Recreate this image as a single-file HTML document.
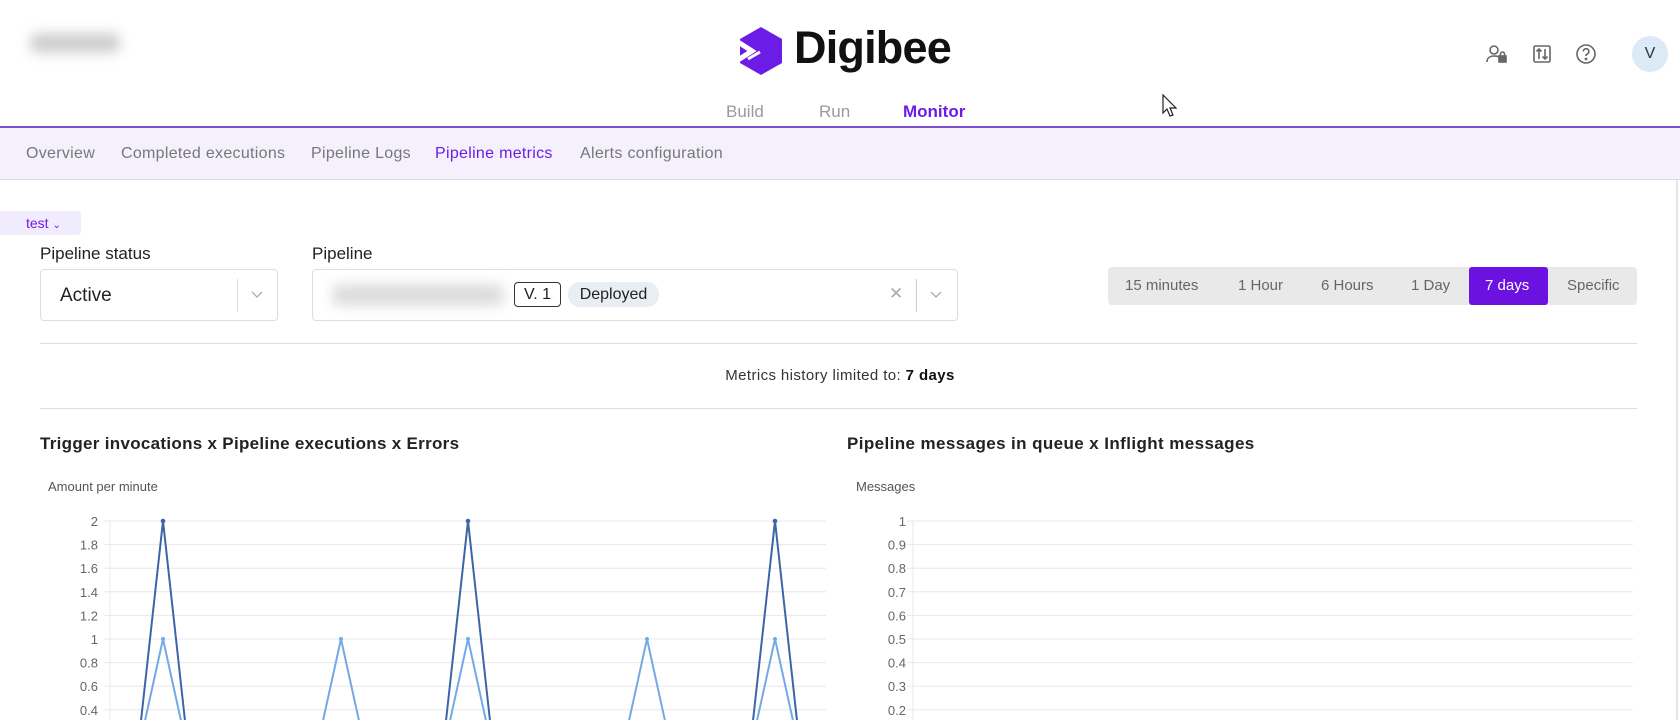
<!DOCTYPE html>
<html><head><meta charset="utf-8"><style>
*{margin:0;padding:0;box-sizing:border-box}
body{width:1680px;height:720px;overflow:hidden;background:#fff;font-family:"Liberation Sans","DejaVu Sans",sans-serif;position:relative;color:#222}
.a{position:absolute;white-space:nowrap}
.blur{filter:blur(6px);background:#cfcfcf;border-radius:8px}
.tab{font-size:17px;color:#9a9a9a;top:102px}
.sub{font-size:16px;color:#777;top:145px;letter-spacing:0.3px}
.lbl{font-size:17px;color:#222}
.tr{font-size:15px;color:#666;top:277px}
</style></head><body>
<div class="a blur" style="left:30px;top:33px;width:90px;height:20px"></div>
<svg class="a" style="left:738px;top:26px" width="46" height="50" viewBox="0 0 46 50"><polygon points="23,1 44,13 44,37 23,49 2,37 2,13" fill="#6b1ce6"/><path d="M0 16L14 25L0 34" fill="none" stroke="#fff" stroke-width="5"/><path d="M10 33L22 26" stroke="#fff" stroke-width="3"/></svg>
<div class="a" style="left:794px;top:22px;font-size:45px;font-weight:bold;color:#111;letter-spacing:-0.8px">Digibee</div>
<svg class="a" style="left:1486px;top:44px" width="22" height="20" viewBox="0 0 22 20" fill="none" stroke="#666" stroke-width="1.6"><circle cx="8" cy="6" r="4"/><path d="M1 18c0-4 3-6 7-6s5 1 6 2"/><rect x="13" y="12" width="7" height="6" fill="#666"/><path d="M14.5 12v-2a2 2 0 0 1 4 0v2"/></svg>
<svg class="a" style="left:1532px;top:44px" width="20" height="20" viewBox="0 0 20 20" fill="none" stroke="#666" stroke-width="1.6"><rect x="2" y="2" width="16" height="16" rx="1.5"/><path d="M7 15V5M4.5 7.5L7 5l2.5 2.5M13 5v10M10.5 12.5L13 15l2.5-2.5"/></svg>
<svg class="a" style="left:1575px;top:43px" width="22" height="22" viewBox="0 0 22 22" fill="none" stroke="#666" stroke-width="1.6"><circle cx="11" cy="11" r="9"/><path d="M8.3 8.5a2.8 2.8 0 1 1 3.8 2.6c-.8.4-1.1 1-1.1 1.9"/><circle cx="11" cy="16" r=".6" fill="#666"/></svg>
<div class="a" style="left:1632px;top:36px;width:36px;height:36px;border-radius:50%;background:#dce9f7;text-align:center;line-height:36px;font-size:16px;color:#333">V</div>
<svg class="a" style="left:1162px;top:94px" width="16" height="24" viewBox="0 0 16 24"><path d="M1 1v18l4-4 3 7 3-1-3-7h6z" fill="#fff" stroke="#222" stroke-width="1.2"/></svg>
<div class="a tab" style="left:726px">Build</div>
<div class="a tab" style="left:819px">Run</div>
<div class="a tab" style="left:903px;color:#6b1ce6;font-weight:bold">Monitor</div>
<div class="a" style="left:0;top:126px;width:1680px;height:54px;background:#f4f1fd;border-top:2px solid #7b4fc9;border-bottom:1px solid #ddd"></div>
<div class="a sub" style="left:26px">Overview</div>
<div class="a sub" style="left:121px">Completed executions</div>
<div class="a sub" style="left:311px">Pipeline Logs</div>
<div class="a sub" style="left:435px;color:#6b1ce6">Pipeline metrics</div>
<div class="a sub" style="left:580px">Alerts configuration</div>
<div class="a" style="left:1676px;top:180px;width:2px;height:540px;background:#e6e6e6"></div>
<div class="a" style="left:0;top:211px;width:81px;height:24px;background:#f1ecfd;border-radius:0 4px 4px 0;font-size:14px;color:#6b1ce6;padding:4px 0 0 26px">test <span style="font-size:10px">&#8964;</span></div>
<div class="a lbl" style="left:40px;top:244px">Pipeline status</div>
<div class="a lbl" style="left:312px;top:244px">Pipeline</div>
<div class="a" style="left:40px;top:269px;width:238px;height:52px;border:1px solid #ddd;border-radius:4px"></div>
<div class="a" style="left:60px;top:285px;font-size:19px;color:#222">Active</div>
<div class="a" style="left:237px;top:279px;width:1px;height:33px;background:#ddd"></div>
<svg class="a" style="left:251px;top:291px" width="12" height="8"><path d="M1 1l5 5 5-5" stroke="#aaa" fill="none" stroke-width="1.3"/></svg>
<div class="a" style="left:312px;top:269px;width:646px;height:52px;border:1px solid #ddd;border-radius:4px"></div>
<div class="a blur" style="left:332px;top:284px;width:172px;height:22px;background:#ddd"></div>
<div class="a" style="left:514px;top:282px;width:47px;height:25px;border:1px solid #333;border-radius:4px;font-size:16px;text-align:center;line-height:23px">V. 1</div>
<div class="a" style="left:568px;top:282px;width:91px;height:25px;background:#e8eef4;border-radius:12px;font-size:16px;text-align:center;line-height:25px">Deployed</div>
<div class="a" style="left:889px;top:284px;font-size:17px;color:#aaa">✕</div>
<div class="a" style="left:916px;top:279px;width:1px;height:33px;background:#ccc"></div>
<svg class="a" style="left:930px;top:291px" width="12" height="8"><path d="M1 1l5 5 5-5" stroke="#aaa" fill="none" stroke-width="1.3"/></svg>
<div class="a" style="left:1108px;top:267px;width:529px;height:38px;background:#e9e9e9;border-radius:4px"></div>
<div class="a" style="left:1469px;top:267px;width:79px;height:38px;background:#6b11e0;border-radius:3px"></div>
<div class="a tr" style="left:1125px">15 minutes</div>
<div class="a tr" style="left:1238px">1 Hour</div>
<div class="a tr" style="left:1321px">6 Hours</div>
<div class="a tr" style="left:1411px">1 Day</div>
<div class="a tr" style="left:1485px;color:#fff">7 days</div>
<div class="a tr" style="left:1567px">Specific</div>
<div class="a" style="left:40px;top:343px;width:1597px;height:1px;background:#ddd"></div>
<div class="a" style="left:0;top:367px;width:1680px;text-align:center;font-size:15px;color:#333;letter-spacing:0.4px">Metrics history limited to: <b style="color:#111">7 days</b></div>
<div class="a" style="left:40px;top:408px;width:1597px;height:1px;background:#ddd"></div>
<div class="a" style="left:40px;top:434px;font-size:17px;font-weight:bold;color:#222;letter-spacing:0.3px">Trigger invocations x Pipeline executions x Errors</div>
<div class="a" style="left:847px;top:434px;font-size:17px;font-weight:bold;color:#222;letter-spacing:0.4px">Pipeline messages in queue x Inflight messages</div>
<div class="a" style="left:48px;top:479px;font-size:13px;color:#555">Amount per minute</div>
<div class="a" style="left:856px;top:479px;font-size:13px;color:#555">Messages</div>
<svg class="a" style="left:0;top:500px" width="1680" height="220">
<g stroke="#e8e8e8" stroke-width="1">
<line x1="104" y1="21" x2="826" y2="21"/><line x1="104" y1="44.6" x2="826" y2="44.6"/><line x1="104" y1="68.2" x2="826" y2="68.2"/><line x1="104" y1="91.8" x2="826" y2="91.8"/><line x1="104" y1="115.4" x2="826" y2="115.4"/><line x1="104" y1="139" x2="826" y2="139"/><line x1="104" y1="162.6" x2="826" y2="162.6"/><line x1="104" y1="186.2" x2="826" y2="186.2"/><line x1="104" y1="209.8" x2="826" y2="209.8"/>
<line x1="110" y1="21" x2="110" y2="220"/>
<line x1="907" y1="21" x2="1633" y2="21"/><line x1="907" y1="44.6" x2="1633" y2="44.6"/><line x1="907" y1="68.2" x2="1633" y2="68.2"/><line x1="907" y1="91.8" x2="1633" y2="91.8"/><line x1="907" y1="115.4" x2="1633" y2="115.4"/><line x1="907" y1="139" x2="1633" y2="139"/><line x1="907" y1="162.6" x2="1633" y2="162.6"/><line x1="907" y1="186.2" x2="1633" y2="186.2"/><line x1="907" y1="209.8" x2="1633" y2="209.8"/>
<line x1="913" y1="21" x2="913" y2="220"/>
</g>
<g fill="none" stroke="#74a9e6" stroke-width="2">
<path d="M137 257L163 139L189 257M315 257L341 139L367 257M442 257L468 139L494 257M621 257L647 139L673 257M749 257L775 139L801 257"/></g>
<g fill="#74a9e6"><circle cx="163" cy="139" r="2"/><circle cx="341" cy="139" r="2"/><circle cx="468" cy="139" r="2"/><circle cx="647" cy="139" r="2"/><circle cx="775" cy="139" r="2"/></g>
<g fill="none" stroke="#3b65a8" stroke-width="2">
<path d="M137 257L163 21L189 257M442 257L468 21L494 257M749 257L775 21L801 257"/></g>
<g fill="#3b65a8"><circle cx="163" cy="21" r="2.3"/><circle cx="468" cy="21" r="2.3"/><circle cx="775" cy="21" r="2.3"/></g>
<g font-family="Liberation Sans, sans-serif" font-size="13" fill="#666" text-anchor="end">
<text x="98" y="26">2</text><text x="98" y="49.6">1.8</text><text x="98" y="73.2">1.6</text><text x="98" y="96.8">1.4</text><text x="98" y="120.4">1.2</text><text x="98" y="144">1</text><text x="98" y="167.6">0.8</text><text x="98" y="191.2">0.6</text><text x="98" y="214.8">0.4</text>
<text x="906" y="26">1</text><text x="906" y="49.6">0.9</text><text x="906" y="73.2">0.8</text><text x="906" y="96.8">0.7</text><text x="906" y="120.4">0.6</text><text x="906" y="144">0.5</text><text x="906" y="167.6">0.4</text><text x="906" y="191.2">0.3</text><text x="906" y="214.8">0.2</text>
</g></svg>
</body></html>
